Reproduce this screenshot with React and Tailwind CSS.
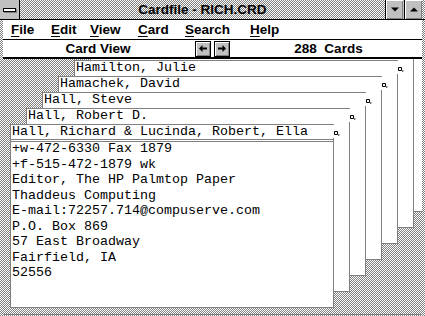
import React from 'react'

// Windows 3.1 style 50% dither used for the title bar, frame and desktop behind the cards
const dither =
    "bg-[url('data:image/svg+xml,%3Csvg%20xmlns=%22http://www.w3.org/2000/svg%22%20width=%222%22%20height=%222%22%20shape-rendering=%22crispEdges%22%3E%3Crect%20width=%222%22%20height=%222%22%20fill=%22%23ffffff%22/%3E%3Cpath%20d=%22M1%200h1v1H1zM0%201h1v1H0z%22%20fill=%22%23808080%22/%3E%3C/svg%3E')] bg-repeat"

const menus = [
    { label: 'File', w: 'w-[40px]' },
    { label: 'Edit', w: 'w-[39px]' },
    { label: 'View', w: 'w-[48px]' },
    { label: 'Card', w: 'w-[47px]' },
    { label: 'Search', w: 'w-[65px]' },
    { label: 'Help', w: 'w-[40px]' },
]

// front to back (the last two sit behind the toolbar, only their edges show)
const cards = [
    {
        name: 'Hall, Richard & Lucinda, Robert, Ella',
        lines: [
            '+w-472-6330 Fax 1879',
            '+f-515-472-1879 wk',
            'Editor, The HP Palmtop Paper',
            'Thaddeus Computing',
            'E-mail:72257.714@compuserve.com',
            'P.O. Box 869',
            '57 East Broadway',
            'Fairfield, IA',
            '52556',
        ],
    },
    { name: 'Hall, Robert D.' },
    { name: 'Hall, Steve' },
    { name: 'Hamachek, David' },
    { name: 'Hamilton, Julie' },
    { name: '' },
    { name: '' },
]

function CornerMark() {
    return (
        <svg className="absolute left-[322px] top-[6px]" width="7" height="6" viewBox="0 0 7 6">
            <path d="M1.5 1.5h3v3h-3z" fill="none" stroke="#000" strokeWidth="1" />
            <path d="M5 5h1.5" stroke="#000" strokeWidth="1" />
        </svg>
    )
}

function Card({ index, name, lines }) {
    const front = index === 0
    return (
        <div
            className="absolute w-[324px] h-[184px] bg-white border-l border-b border-[#808080]"
            style={{ left: 7 + 16 * index, top: 65 - 16 * index }}
        >
            {/* ヘッダー */}
            <div
                className={`h-[18px] border-t border-[#808080] pl-[1px] leading-[14px] whitespace-pre ${front ? 'border-b-[3px] border-double' : ''}`}
            >
                {name}
            </div>
            <div className="absolute right-0 top-[14px] bottom-0 w-px bg-[#808080]" />
            <CornerMark />
            {lines && (
                <div className="-mt-[1px] pl-[1px] leading-[15.5px] whitespace-pre">
                    {lines.map((l) => (
                        <div key={l}>{l}</div>
                    ))}
                </div>
            )}
        </div>
    )
}

function ArrowButton({ dir }) {
    return (
        <div className="w-[16px] h-[16px] bg-[#c0c0c0] border border-black shadow-[inset_1px_1px_#ffffff,inset_-1px_-1px_#808080] flex items-center justify-center">
            <svg width="8" height="7" viewBox="0 0 8 7">
                {dir === 'left' ? (
                    <path d="M0 3.5L3.5 0v2.5H8v2H3.5V7z" fill="#000" />
                ) : (
                    <path d="M8 3.5L4.5 0v2.5H0v2h4.5V7z" fill="#000" />
                )}
            </svg>
        </div>
    )
}

function SizeButton({ up }) {
    return (
        <div className="w-[18px] h-[19px] bg-[#c0c0c0] border-l border-black shadow-[inset_1px_1px_#ffffff,inset_-1px_-1px_#808080] flex items-center justify-center">
            <svg width="8" height="5" viewBox="0 0 8 5">
                {up ? <path d="M0 4.5L4 0.5L8 4.5z" fill="#000" /> : <path d="M0 0.5L4 4.5L8 0.5z" fill="#000" />}
            </svg>
        </div>
    )
}

export default function App() {
    return (
        <div
            className={`w-[425px] h-[316px] flex flex-col overflow-hidden text-black bg-[#c0c0c0] ${dither}`}
            style={{ fontFamily: '"Liberation Sans", Arial, sans-serif' }}
        >
            {/* タイトルバー */}
            <div className="h-[20px] flex border-b border-black shrink-0">
                <div className="w-[20px] h-[19px] bg-[#c0c0c0] border-r border-black flex items-center justify-center">
                    <div className="w-[13px] h-[4px] bg-white border border-black shadow-[1px_1px_#808080]" />
                </div>
                <div className="flex-1 text-center font-bold text-[13.5px] leading-[19px]">Cardfile - RICH.CRD</div>
                <SizeButton />
                <div className="w-px bg-[#c0c0c0]" />
                <SizeButton up />
                <div className="w-[3px]" />
            </div>

            {/* メニューバー */}
            <div className="mx-[3px] h-[20px] bg-white border-b border-black flex items-center pl-[8px] font-bold text-[13.5px] leading-[17px] shrink-0">
                {menus.map((m) => (
                    <span key={m.label} className={`${m.w} shrink-0 first-letter:underline first-letter:underline-offset-2`}>
                        {m.label}
                    </span>
                ))}
            </div>

            {/* ツールバー */}
            <div className="mx-[3px] h-[19px] bg-white border-b-2 border-black flex items-center font-bold text-[13.5px] leading-[16px] shrink-0">
                <div className="w-[190px] text-center">Card View</div>
                <div className="ml-[2px] flex gap-[3px]">
                    <ArrowButton dir="left" />
                    <ArrowButton dir="right" />
                </div>
                <div className="flex-1 text-center pl-[5px] whitespace-pre">288  Cards</div>
            </div>

            {/* カード */}
            <div
                className={`relative mx-[3px] mb-[1px] flex-1 overflow-hidden border-b border-[#808080] bg-[#c0c0c0] ${dither}`}
                style={{ fontFamily: '"Liberation Mono", "Courier New", monospace', fontSize: '13.33px' }}
            >
                {cards
                    .map((c, i) => ({ ...c, i }))
                    .reverse()
                    .map((c) => (
                        <Card key={c.i} index={c.i} name={c.name} lines={c.lines} />
                    ))}
            </div>
        </div>
    )
}
